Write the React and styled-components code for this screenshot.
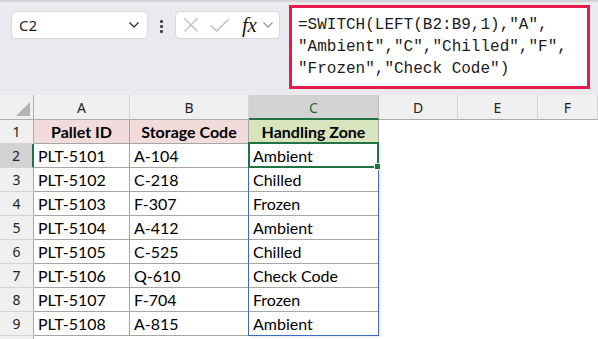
import React from "react";
import styled, { createGlobalStyle } from "styled-components";

const Global = createGlobalStyle`
  html, body { margin: 0; padding: 0; background: #ffffff; overflow: hidden; }
  body { width: 598px; height: 339px; }
`;

const Page = styled.div`
  width: 598px;
  height: 339px;
  overflow: hidden;
  background: #fff;
  display: flex;
  flex-direction: column;
`;

const TopBar = styled.div`
  height: 95px;
  flex: none;
  background: #e9e9ee;
  border-top: 2px solid #d4d4d8;
  box-sizing: border-box;
  display: flex;
  align-items: flex-start;
  padding: 9px 0 0 11px;
`;

const Box = styled.div`
  height: 28px;
  width: ${(p) => p.$w}px;
  box-sizing: border-box;
  background: #fff;
  border: 1px solid #d9d9dd;
  border-radius: 5px;
  display: flex;
  align-items: center;
`;

const NameText = styled.span`
  font-family: "Noto Sans", "Liberation Sans", sans-serif;
  font-size: 15px;
  color: #1f1f1f;
  margin-left: 7px;
  flex: 1;
`;

const Dots = styled.div`
  width: 27px;
  display: flex;
  flex-direction: column;
  align-items: center;
  gap: 2px;
  padding-top: 9px;
  span {
    width: 3px;
    height: 3px;
    background: #444;
    border-radius: 1px;
  }
`;

const Fx = styled.span`
  font-family: "Liberation Serif", "DejaVu Serif", serif;
  font-style: italic;
  font-weight: 400;
  font-size: 21px;
  color: #1a1a1a;
  margin-left: 12px;
  letter-spacing: -0.3px;
  line-height: 1;
`;

const Formula = styled.div`
  margin-left: 9px;
  margin-top: -6px;
  width: 301px;
  height: 84px;
  box-sizing: border-box;
  border: 3px solid #e31c4b;
  background: #fff;
  padding: 6px 0 0 6px;
  font-family: "Liberation Mono", "DejaVu Sans Mono", monospace;
  font-size: 16px;
  line-height: 22px;
  color: #1c1c1c;
  white-space: pre;
`;

const Grid = styled.div`
  display: grid;
  grid-template-columns: 34px 96px 119px 130px 79px 80px 1fr;
  grid-auto-rows: 24px;
  grid-template-rows: 25px;
  position: relative;
`;

const ColHead = styled.div`
  background: ${(p) => (p.$sel ? "#d3d3d3" : "#f0f0f0")};
  border-right: 1px solid ${(p) => (p.$sel ? "#bdbdbd" : "#d5d5d5")};
  border-bottom: ${(p) => (p.$sel ? "2px solid #217346" : "1px solid #ababab")};
  box-sizing: border-box;
  display: flex;
  align-items: center;
  justify-content: center;
  font-family: "Noto Sans", "Liberation Sans", sans-serif;
  font-size: 14px;
  color: ${(p) => (p.$sel ? "#1d6b45" : "#222")};
  padding-top: 1px;
`;

const Corner = styled.div`
  background: #f0f0f0;
  border-right: 1px solid #ababab;
  border-bottom: 1px solid #ababab;
  box-sizing: border-box;
  position: relative;
  &::after {
    content: "";
    position: absolute;
    right: 3px;
    bottom: 3px;
    width: 0;
    height: 0;
    border-left: 14px solid transparent;
    border-bottom: 14px solid #b4b4b4;
  }
`;

const RowHead = styled.div`
  background: ${(p) => (p.$sel ? "#d3d3d3" : "#f0f0f0")};
  border-right: ${(p) => (p.$sel ? "2px solid #217346" : "1px solid #ababab")};
  border-bottom: 1px solid #d5d5d5;
  box-sizing: border-box;
  display: flex;
  align-items: center;
  justify-content: center;
  font-family: "Noto Sans", "Liberation Sans", sans-serif;
  font-size: 14px;
  color: #222;
`;

const Cell = styled.div`
  background: ${(p) => p.$bg || "#fff"};
  border-right: 1px solid ${(p) => (p.$table ? "#a6a6a6" : "transparent")};
  border-bottom: 1px solid ${(p) => (p.$table ? "#a6a6a6" : "transparent")};
  box-sizing: border-box;
  display: flex;
  align-items: center;
  justify-content: ${(p) => (p.$center ? "center" : "flex-start")};
  padding-left: ${(p) => (p.$center ? 0 : 4)}px;
  font-family: Lato, "Liberation Sans", sans-serif;
  font-size: 16px;
  font-weight: ${(p) => (p.$bold ? 700 : 400)};
  color: #000;
  white-space: nowrap;
  overflow: hidden;
`;

const RangeOutline = styled.div`
  position: absolute;
  left: 248px;
  top: 48px;
  width: 131px;
  height: 193px;
  box-sizing: border-box;
  border: 1px solid #3a6cc6;
  box-shadow: 2px 1px 2px rgba(0, 0, 0, 0.08);
  pointer-events: none;
`;

const Active = styled.div`
  position: absolute;
  left: 248px;
  top: 47px;
  width: 131px;
  height: 26px;
  box-sizing: border-box;
  border: 2px solid #217346;
  pointer-events: none;
  &::after {
    content: "";
    position: absolute;
    right: -4px;
    bottom: -4px;
    width: 5px;
    height: 5px;
    background: #217346;
    border: 1px solid #fff;
  }
`;

const Chevron = ({ color = "#333", w = 12, style }) => (
  <svg width={w} height={8} viewBox="0 0 12 8" style={style}>
    <path d="M1.5 1.5 L6 6 L10.5 1.5" fill="none" stroke={color} strokeWidth="1.4" />
  </svg>
);

const data = [
  ["PLT-5101", "A-104", "Ambient"],
  ["PLT-5102", "C-218", "Chilled"],
  ["PLT-5103", "F-307", "Frozen"],
  ["PLT-5104", "A-412", "Ambient"],
  ["PLT-5105", "C-525", "Chilled"],
  ["PLT-5106", "Q-610", "Check Code"],
  ["PLT-5107", "F-704", "Frozen"],
  ["PLT-5108", "A-815", "Ambient"],
];

export default function App() {
  return (
    <Page>
      <Global />
      <TopBar>
        <Box $w={137}>
          <NameText>C2</NameText>
          <Chevron color="#333" style={{ marginRight: 7 }} />
        </Box>
        <Dots>
          <span />
          <span />
          <span />
        </Dots>
        <Box $w={105}>
          <svg width="16" height="16" viewBox="0 0 16 16" style={{ marginLeft: 7 }}>
            <path d="M1.5 1.5 L14.5 14.5 M14.5 1.5 L1.5 14.5" stroke="#bcbcbc" strokeWidth="1.3" fill="none" />
          </svg>
          <svg width="20" height="14" viewBox="0 0 20 14" style={{ marginLeft: 11 }}>
            <path d="M1 7.5 L6.5 13 L19 1" stroke="#bcbcbc" strokeWidth="1.3" fill="none" />
          </svg>
          <Fx>fx</Fx>
          <Chevron color="#9a9a9a" w={12} style={{ marginLeft: 5 }} />
        </Box>
        <Formula>{`=SWITCH(LEFT(B2:B9,1),"A",\n"Ambient","C","Chilled","F",\n"Frozen","Check Code")`}</Formula>
      </TopBar>
      <Grid>
        <Corner />
        <ColHead>A</ColHead>
        <ColHead>B</ColHead>
        <ColHead $sel>C</ColHead>
        <ColHead>D</ColHead>
        <ColHead>E</ColHead>
        <ColHead>F</ColHead>

        <RowHead>1</RowHead>
        <Cell $table $bold $center $bg="#f2dcdb">Pallet ID</Cell>
        <Cell $table $bold $center $bg="#f2dcdb">Storage Code</Cell>
        <Cell $table $bold $center $bg="#d8e4bc">Handling Zone</Cell>
        <Cell />
        <Cell />
        <Cell />

        {data.map((r, i) => (
          <React.Fragment key={i}>
            <RowHead $sel={i === 0}>{i + 2}</RowHead>
            <Cell $table>{r[0]}</Cell>
            <Cell $table>{r[1]}</Cell>
            <Cell $table>{r[2]}</Cell>
            <Cell />
            <Cell />
            <Cell />
          </React.Fragment>
        ))}
        <RowHead />
        <RangeOutline />
        <Active />
      </Grid>
    </Page>
  );
}
